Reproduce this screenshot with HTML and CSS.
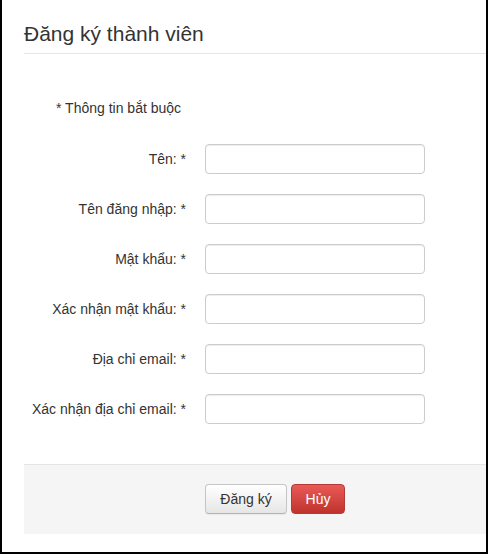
FILE: index.html
```html
<!DOCTYPE html>
<html lang="vi">
<head>
<meta charset="utf-8">
<title>Đăng ký thành viên</title>
<link rel="stylesheet" href="styles.css">
</head>
<body>
<div class="frame">
  <div class="header"><h1 class="title">Đăng ký thành viên</h1></div>
  <div class="body">
    <p class="required">* Thông tin bắt buộc</p>
    <form class="form">
      <label class="label">Tên: *</label><input class="input" type="text">
      <label class="label">Tên đăng nhập: *</label><input class="input" type="text">
      <label class="label">Mật khẩu: *</label><input class="input" type="password">
      <label class="label">Xác nhận mật khẩu: *</label><input class="input" type="password">
      <label class="label">Địa chỉ email: *</label><input class="input" type="text">
      <label class="label">Xác nhận địa chỉ email: *</label><input class="input" type="text">
    </form>
  </div>
  <div class="footer">
    <button class="btn btn-default" type="button">Đăng ký</button>
    <button class="btn btn-danger" type="button">Hủy</button>
  </div>
</div>
</body>
</html>
```

FILE: styles.css
```css
html, body {
  margin: 0;
  padding: 0;
  background: #fff;
}
body {
  font-family: "Liberation Sans", Arial, sans-serif;
  color: #333;
  font-size: 14px;
}
.frame {
  box-sizing: border-box;
  width: 488px;
  height: 554px;
  border-left: 2px solid #000;
  border-right: 2px solid #000;
  border-bottom: 2px solid #000;
  padding-left: 22px;
}
.header {
  height: 54px;
  box-sizing: border-box;
  border-bottom: 1px solid #e5e5e5;
  padding-top: 22px;
}
.title {
  margin: 0;
  font-size: 21px;
  line-height: 24px;
  font-weight: normal;
  color: #333;
}
.body {
  height: 410px;
  box-sizing: border-box;
  padding-top: 46px;
}
.required {
  margin: 0 0 28px 32px;
  line-height: 16px;
}
.form {
  display: grid;
  grid-template-columns: 162px 220px;
  column-gap: 19px;
  row-gap: 20px;
  align-items: center;
}
.label {
  text-align: right;
  line-height: 16px;
  white-space: nowrap;
}
.input {
  box-sizing: border-box;
  width: 220px;
  height: 30px;
  margin: 0;
  border: 1px solid #ccc;
  border-radius: 4px;
  box-shadow: inset 0 1px 1px rgba(0,0,0,0.075);
  background: #fff;
}
.footer {
  box-sizing: border-box;
  height: 70px;
  border-top: 1px solid #e5e5e5;
  background: #f5f5f5;
  display: flex;
  align-items: flex-start;
  padding-top: 19px;
  padding-left: 181px;
  gap: 4px;
}
.btn {
  box-sizing: border-box;
  height: 30px;
  margin: 0;
  border-radius: 4px;
  font-family: "Liberation Sans", Arial, sans-serif;
  font-size: 14px;
  line-height: 18px;
  padding: 0;
  cursor: pointer;
}
.btn-default {
  width: 82px;
  color: #333;
  border: 1px solid #c6c6c6;
  border-bottom-color: #b3b3b3;
  background: linear-gradient(#ffffff, #e6e6e6);
  box-shadow: 0 1px 1px rgba(0,0,0,0.05);
}
.btn-danger {
  width: 54px;
  color: #fff;
  border: 1px solid #b33a36;
  background: linear-gradient(#ea5a57, #c0332d);
}
```
